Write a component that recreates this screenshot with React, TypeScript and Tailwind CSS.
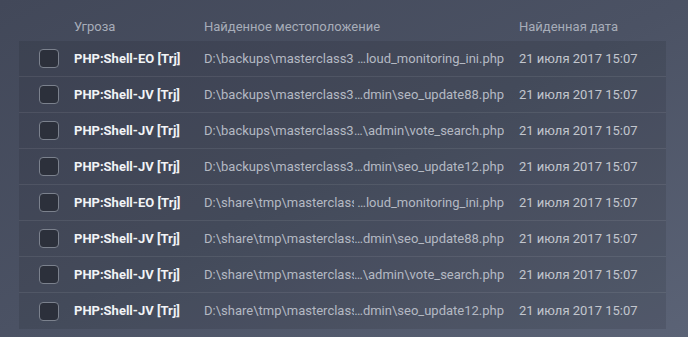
import React from "react";

const rows = [
  { t: "PHP:Shell-EO [Trj]", l: "D:\\backups\\masterclass3", r: " …loud_monitoring_ini.php" },
  { t: "PHP:Shell-JV [Trj]", l: "D:\\backups\\masterclass3", r: "…dmin\\seo_update88.php" },
  { t: "PHP:Shell-JV [Trj]", l: "D:\\backups\\masterclass3", r: "…\\admin\\vote_search.php" },
  { t: "PHP:Shell-JV [Trj]", l: "D:\\backups\\masterclass3", r: "…dmin\\seo_update12.php" },
  { t: "PHP:Shell-EO [Trj]", l: "D:\\share\\tmp\\masterclass3", r: " …loud_monitoring_ini.php" },
  { t: "PHP:Shell-JV [Trj]", l: "D:\\share\\tmp\\masterclass3", r: "…dmin\\seo_update88.php" },
  { t: "PHP:Shell-JV [Trj]", l: "D:\\share\\tmp\\masterclass3", r: "…\\admin\\vote_search.php" },
  { t: "PHP:Shell-JV [Trj]", l: "D:\\share\\tmp\\masterclass3", r: "…dmin\\seo_update12.php" },
];

export default function App() {
  return (
    <div
      className="w-[688px] h-[337px] overflow-hidden bg-gradient-to-br from-[#424859] via-[#4b5264] to-[#5b6376] text-[13px]"
      style={{ fontFamily: "Roboto, 'Liberation Sans', sans-serif" }}
    >
      <div className="h-[41px] flex items-end pb-[5px] text-[#a7adb9]">
        <div className="w-[74px]" />
        <div className="w-[130px]">Угроза</div>
        <div className="w-[315px]">Найденное местоположение</div>
        <div>Найденная дата</div>
      </div>
      <div className="ml-[19px] w-[647px] flex flex-col divide-y divide-[#ffffff14] bg-[#00000018]">
        {rows.map((r, i) => (
          <div key={i} className="h-[36px] flex items-center">
            <div className="w-[20px] ml-[20px] h-[19px] rounded-[4px] border border-[#7b818d] bg-[#2c303b]" />
            <div className="ml-[15px] w-[130px] font-bold text-[#f1f3f6] whitespace-nowrap">{r.t}</div>
            <div className="flex w-[300px] text-[#b4b9c3] whitespace-nowrap">
              <div className="w-[150px] overflow-hidden">{r.l}</div>
              <div className="w-[150px] text-right overflow-hidden whitespace-pre">{r.r}</div>
            </div>
            <div className="ml-[15px] text-[#c2c6ce] whitespace-nowrap">21 июля 2017 15:07</div>
          </div>
        ))}
      </div>
    </div>
  );
}
